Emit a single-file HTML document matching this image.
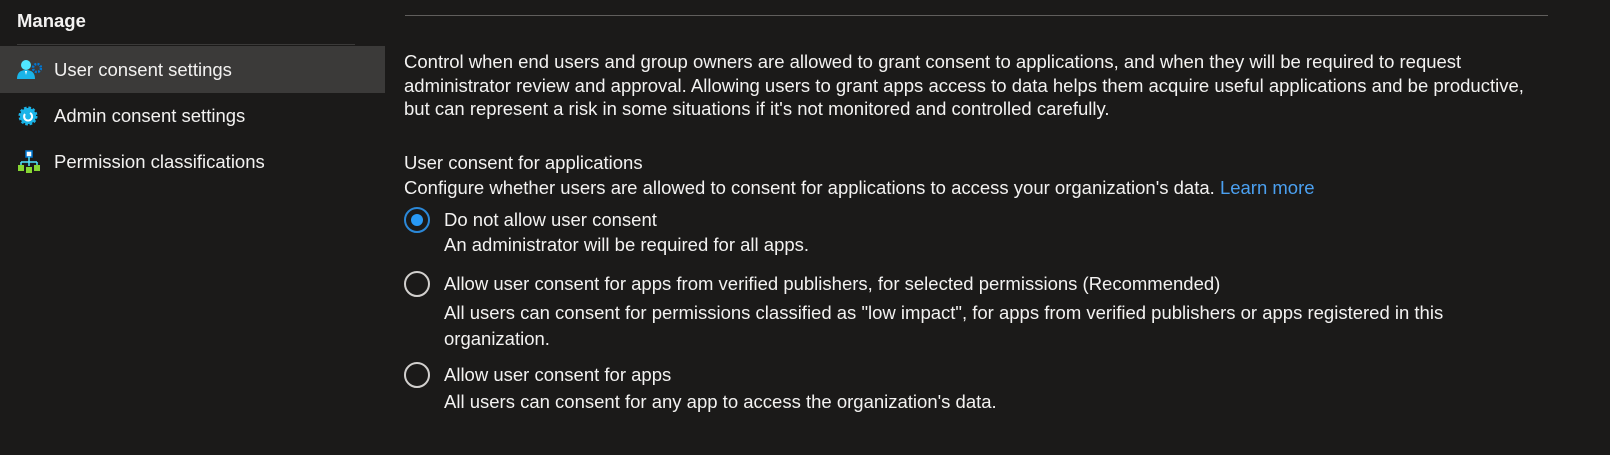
<!DOCTYPE html>
<html><head><meta charset="utf-8"><style>
*{margin:0;padding:0;box-sizing:border-box}
body{width:1610px;height:455px;background:#1b1a19;color:#f3f2f1;font-family:"Segoe UI","Liberation Sans",sans-serif;font-size:18.5px;position:relative;overflow:hidden}
.a{position:absolute;white-space:nowrap;line-height:20px}
.sel{position:absolute;left:0;top:46px;width:385px;height:47px;background:#3b3a39}
.hr{position:absolute;height:1px;background:#605e5c}
.radio{position:absolute;width:26px;height:26px;border-radius:50%;border:2px solid #d2d0ce}
.radio.on{border-color:#2b88d8}
.radio.on::after{content:"";position:absolute;left:5px;top:5px;width:12px;height:12px;border-radius:50%;background:#2899f5}
a{color:#4ba0f0;text-decoration:none}
</style></head><body>
<div class="a" style="left:17px;top:11px;font-weight:bold;font-size:18.5px">Manage</div>
<div class="hr" style="left:17px;top:44px;width:338px;background:#3b3a39"></div>
<div class="sel"></div>
<svg class="a" style="left:16px;top:59px" width="26" height="22" viewBox="0 0 26 22">
<circle cx="10" cy="6" r="5" fill="#50e6ff"/><path d="M1 20 Q1 11 10 11 Q19 11 19 20Z" fill="#1ab4e8"/><path d="M9 12l1 4 1-4z" fill="#fff"/>
<circle cx="21" cy="9" r="4" fill="none" stroke="#0078d4" stroke-width="2.5" stroke-dasharray="2 1.2"/></svg>
<div class="a" style="left:54px;top:60px">User consent settings</div>
<svg class="a" style="left:17px;top:105px" width="22" height="22" viewBox="0 0 22 22">
<circle cx="11" cy="11" r="8" fill="#1ab4e8" stroke="#1ab4e8" stroke-width="3" stroke-dasharray="2.5 1.7"/>
<path d="M8 9 A4 4 0 1 0 13 8" fill="none" stroke="#fff" stroke-width="2"/></svg>
<div class="a" style="left:54px;top:106px">Admin consent settings</div>
<svg class="a" style="left:17px;top:150px" width="24" height="24" viewBox="0 0 24 24">
<rect x="9" y="1" width="6" height="6" fill="#fff" stroke="#0078d4" stroke-width="1.5"/>
<path d="M12 7v5M4 12h16M4 12v4M12 12v4M20 12v4" stroke="#50e6ff" stroke-width="1.5" fill="none"/>
<rect x="1" y="15" width="6" height="6" fill="#86d633"/><rect x="9" y="17" width="6" height="6" fill="#86d633"/><rect x="17" y="15" width="6" height="6" fill="#86d633"/></svg>
<div class="a" style="left:54px;top:152px">Permission classifications</div>

<div class="hr" style="left:405px;top:15px;width:1143px"></div>
<div class="a" style="left:404px;top:50px;line-height:23.5px">Control when end users and group owners are allowed to grant consent to applications, and when they will be required to request<br>administrator review and approval. Allowing users to grant apps access to data helps them acquire useful applications and be productive,<br>but can represent a risk in some situations if it's not monitored and controlled carefully.</div>
<div class="a" style="left:404px;top:153px">User consent for applications</div>
<div class="a" style="left:404px;top:178px">Configure whether users are allowed to consent for applications to access your organization's data. <a>Learn more</a></div>
<div class="radio on" style="left:404px;top:207px"></div>
<div class="a" style="left:444px;top:210px">Do not allow user consent</div>
<div class="a" style="left:444px;top:235px">An administrator will be required for all apps.</div>
<div class="radio" style="left:404px;top:271px"></div>
<div class="a" style="left:444px;top:274px">Allow user consent for apps from verified publishers, for selected permissions (Recommended)</div>
<div class="a" style="left:444px;top:300px;line-height:26px">All users can consent for permissions classified as "low impact", for apps from verified publishers or apps registered in this<br>organization.</div>
<div class="radio" style="left:404px;top:362px"></div>
<div class="a" style="left:444px;top:365px">Allow user consent for apps</div>
<div class="a" style="left:444px;top:392px">All users can consent for any app to access the organization's data.</div>
</body></html>
